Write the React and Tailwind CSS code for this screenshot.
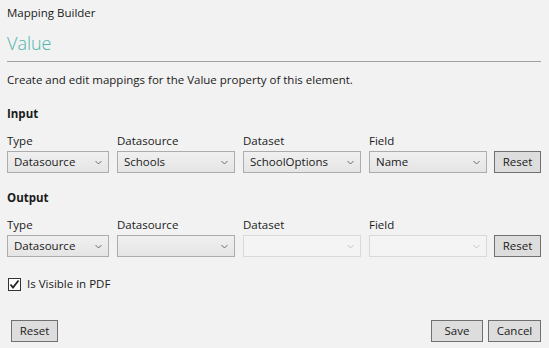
import React from 'react';

const Chevron = ({ disabled }) => (
  <svg width="7" height="5" viewBox="0 0 7 5" className="shrink-0">
    <path d="M0.5 1 L3.5 4 L6.5 1" fill="none" stroke={disabled ? '#c4c4c4' : '#6a6a6a'} strokeWidth="1" />
  </svg>
);

const Select = ({ value, width, disabled }) => (
  <div
    className={`h-[22px] flex items-center justify-between pl-[6px] pr-[6px] border ${
      disabled ? 'border-[#d9d9d9] bg-[#f4f4f4]' : 'border-[#acacac] bg-gradient-to-b from-[#f0f0f0] to-[#e5e5e5]'
    }`}
    style={{ width }}
  >
    <span className="text-[11.5px] leading-[16px] text-[#1a1a1a]">{value}</span>
    <Chevron disabled={disabled} />
  </div>
);

const Button = ({ children, width = 47 }) => (
  <button
    className="h-[22px] border border-[#707070] bg-[#dddddd] text-[11.5px] leading-[16px] text-[#1a1a1a] flex items-center justify-center"
    style={{ width }}
  >
    {children}
  </button>
);

const MappingRow = ({ title, values, disabled }) => {
  const cols = [
    { label: 'Type', w: 102 },
    { label: 'Datasource', w: 118 },
    { label: 'Dataset', w: 118 },
    { label: 'Field', w: 118 },
  ];
  return (
    <div className="flex flex-col">
      <div className="text-[11.5px] leading-[16px] font-bold text-[#1a1a1a]">{title}</div>
      <div className="flex items-end mt-[11px]">
        {cols.map((c, i) => (
          <div key={c.label} className="flex flex-col mr-[8px]" style={{ width: c.w }}>
            <div className="text-[11.5px] leading-[16px] text-[#1a1a1a] mb-[2px]">{c.label}</div>
            <Select value={values[i]} width={c.w} disabled={disabled[i]} />
          </div>
        ))}
        <div className="-ml-[1px]">
          <Button>Reset</Button>
        </div>
      </div>
    </div>
  );
};

export default function App() {
  return (
    <div
      className="w-[549px] h-[348px] bg-[#f2f2f2] px-[7px] pt-[5px] flex flex-col overflow-hidden"
      style={{ fontFamily: '"Open Sans", "Noto Sans", sans-serif' }}
    >
      <div className="text-[11.5px] leading-[16px] text-[#1a1a1a]">Mapping Builder</div>
      <div className="mt-[9px] pb-[5px] border-b border-[#a0a0a0] w-[534px]">
        <div className="text-[18px] leading-[26px] font-light text-[#4fb3ac]">Value</div>
      </div>
      <div className="mt-[10px] text-[11.5px] leading-[16px] text-[#1a1a1a]">
        Create and edit mappings for the Value property of this element.
      </div>

      <div className="mt-[18px]">
        <MappingRow
          title="Input"
          values={['Datasource', 'Schools', 'SchoolOptions', 'Name']}
          disabled={[false, false, false, false]}
        />
      </div>

      <div className="mt-[17px]">
        <MappingRow
          title="Output"
          values={['Datasource', '', '', '']}
          disabled={[false, false, true, true]}
        />
      </div>

      <div className="mt-[19px] flex items-center h-[16px]">
        <div className="w-[13px] h-[13px] ml-[1px] border border-[#333333] bg-white flex items-center justify-center">
          <svg width="11" height="11" viewBox="0 0 11 11">
            <path d="M1.5 5.5 L4 8.5 L9.5 1.5" fill="none" stroke="#222" strokeWidth="1.8" />
          </svg>
        </div>
        <span className="ml-[6px] text-[11.5px] leading-[16px] text-[#1a1a1a]">Is Visible in PDF</span>
      </div>

      <div className="mt-[28px] flex items-center w-[534px]">
        <div className="ml-[4px]">
          <Button>Reset</Button>
        </div>
        <div className="ml-auto flex gap-[5px]">
          <Button width={52}>Save</Button>
          <Button width={53}>Cancel</Button>
        </div>
      </div>
    </div>
  );
}
